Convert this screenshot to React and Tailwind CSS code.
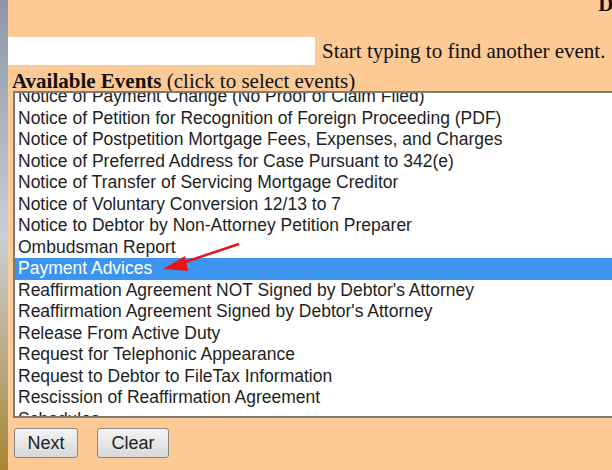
import React from "react";

const events = [
  "Notice of Payment Change (No Proof of Claim Filed)",
  "Notice of Petition for Recognition of Foreign Proceeding (PDF)",
  "Notice of Postpetition Mortgage Fees, Expenses, and Charges",
  "Notice of Preferred Address for Case Pursuant to 342(e)",
  "Notice of Transfer of Servicing Mortgage Creditor",
  "Notice of Voluntary Conversion 12/13 to 7",
  "Notice to Debtor by Non-Attorney Petition Preparer",
  "Ombudsman Report",
  "Payment Advices",
  "Reaffirmation Agreement NOT Signed by Debtor's Attorney",
  "Reaffirmation Agreement Signed by Debtor's Attorney",
  "Release From Active Duty",
  "Request for Telephonic Appearance",
  "Request to Debtor to FileTax Information",
  "Rescission of Reaffirmation Agreement",
  "Schedules",
];

const selected = "Payment Advices";

export default function App() {
  return (
    <div className="flex h-[470px] w-[612px] overflow-hidden bg-[#fdca96] font-['Liberation_Serif',serif] text-[#111]">
      <div className="w-[8px] shrink-0 bg-gradient-to-b from-[#8c97a6] via-[#c9cfd6] to-[#a8852e]" />

      <div className="flex min-w-0 flex-1 flex-col">
        <div className="flex h-[37px] justify-end overflow-hidden">
          <span className="-mt-[11px] mr-[-12px] text-[21px] font-bold">Do</span>
        </div>

        <div className="flex items-center">
          <input className="h-[28px] w-[307px] shrink-0 border-0 bg-white outline-none" />
          <span className="ml-[7px] whitespace-nowrap text-[21px] leading-none">Start typing to find another event.</span>
        </div>

        <div className="mt-[6px] whitespace-nowrap pl-[4px] text-[21px] leading-[20px]">
          <b>Available Events</b> (click to select events)
        </div>

        <div className="ml-[5px] h-[327px] overflow-hidden border-2 border-r-0 border-[#7d7b78] bg-white">
          <ul className="-mt-[7px] font-['Liberation_Sans',Arial,sans-serif] text-[17.5px] leading-[21.5px] text-[#1e1e1e]">
            {events.map((ev) => (
              <li
                key={ev}
                className={
                  ev === selected
                    ? "relative whitespace-nowrap bg-[#3b94f0] pl-[3px] text-white"
                    : "whitespace-nowrap pl-[3px]"
                }
              >
                {ev}
                {ev === selected && (
                  <svg className="absolute left-[126px] top-[-16px]" width="100" height="36" viewBox="0 0 100 36">
                    <line x1="98" y1="2" x2="38" y2="22" stroke="#e8141c" strokeWidth="2.5" />
                    <polygon points="22,27 44,14 47,29" fill="#e8141c" />
                  </svg>
                )}
              </li>
            ))}
          </ul>
        </div>

        <div className="mt-[10px] flex gap-[19px] pl-[6px] font-['Liberation_Sans',Arial,sans-serif]">
          <button className="h-[30px] w-[64px] rounded-[3px] border border-[#8a8783] bg-gradient-to-b from-[#f4f4f4] to-[#d8d8d8] text-[18px] text-[#222]">
            Next
          </button>
          <button className="h-[30px] w-[72px] rounded-[3px] border border-[#8a8783] bg-gradient-to-b from-[#f4f4f4] to-[#d8d8d8] text-[18px] text-[#222]">
            Clear
          </button>
        </div>
      </div>
    </div>
  );
}
